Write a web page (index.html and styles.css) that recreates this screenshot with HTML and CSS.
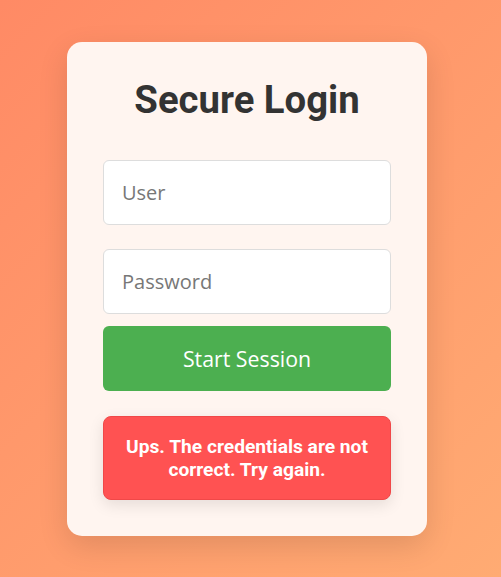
FILE: index.html
```html
<!DOCTYPE html>
<html lang="en">
<head>
<meta charset="utf-8">
<title>Secure Login</title>
<link rel="stylesheet" href="styles.css">
</head>
<body>
  <main class="card">
    <h1 class="title">Secure Login</h1>
    <form class="form">
      <input class="field field-user" type="text" placeholder="User">
      <input class="field field-pass" type="password" placeholder="Password">
      <button class="submit" type="button">Start Session</button>
    </form>
    <div class="error">Ups. The credentials are not correct. Try again.</div>
  </main>
</body>
</html>
```
FILE: styles.css
```css
* { box-sizing: border-box; }
html, body { height: 100%; }
body {
  margin: 0;
  min-height: 100vh;
  display: flex;
  align-items: center;
  justify-content: center;
  padding: 1px 7px 0 0;
  background: linear-gradient(135deg, #ff8a65 0%, #ffab73 100%);
  font-family: "Open Sans", sans-serif;
}
.card {
  width: 360px;
  background: #fff5f0;
  border-radius: 15px;
  padding: 36px;
  box-shadow: 0 10px 30px rgba(0, 0, 0, 0.12);
}
.title {
  margin: 0 0 38px;
  text-align: center;
  font-family: Roboto, sans-serif;
  font-weight: 700;
  font-size: 38.3px;
  color: #333;
  line-height: 44px;
}
.form {
  display: flex;
  flex-direction: column;
}
.field {
  display: block;
  width: 100%;
  height: 65px;
  padding: 18px 18px;
  border: 1px solid #ddd;
  border-radius: 6px;
  background: #fff;
  font-family: "Open Sans", sans-serif;
  font-size: 20px;
  color: #333;
  outline: none;
}
.field::placeholder { color: #777; }
.field-user { margin-bottom: 24px; }
.field-pass { margin-bottom: 12px; }
.submit {
  display: block;
  width: 100%;
  height: 65px;
  border: none;
  border-radius: 6px;
  background: #4caf50;
  color: #fff;
  font-family: "Open Sans", sans-serif;
  font-size: 21.3px;
  cursor: pointer;
}
.error {
  margin-top: 25px;
  padding: 18px 14px;
  background: #ff5252;
  border: 1px solid #f04848;
  border-radius: 8px;
  color: #fff;
  font-family: Roboto, sans-serif;
  font-weight: 700;
  font-size: 19.2px;
  line-height: 23px;
  text-align: center;
  box-shadow: 0 5px 15px rgba(0, 0, 0, 0.1);
}
```
